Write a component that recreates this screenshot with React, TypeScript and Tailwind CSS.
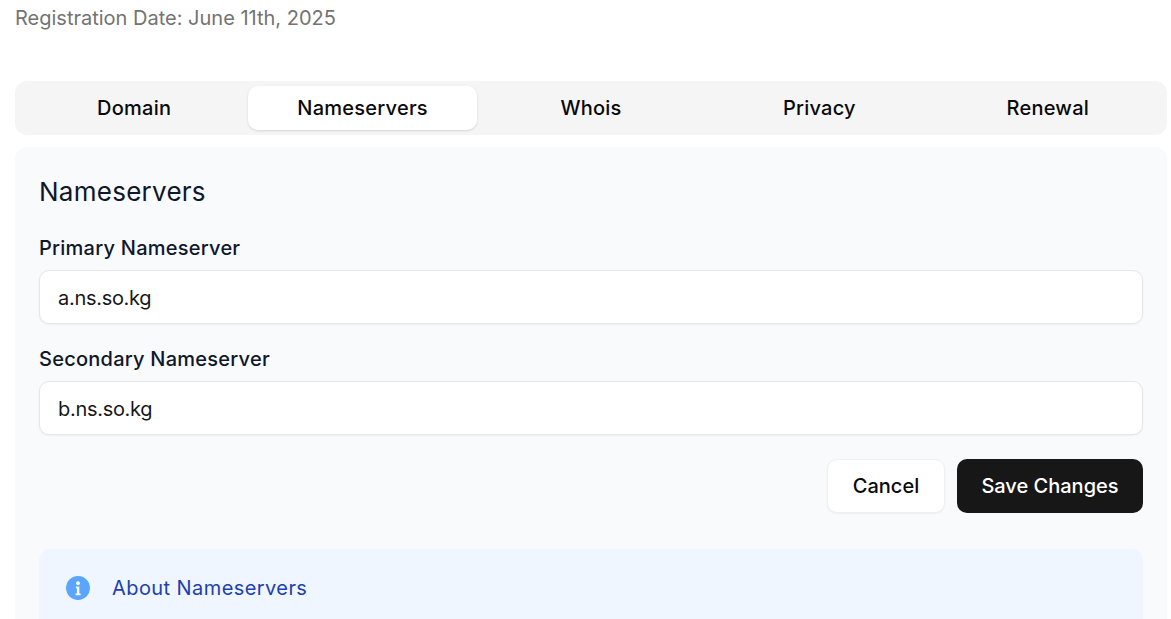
const tabs = ["Domain", "Nameservers", "Whois", "Privacy", "Renewal"];

function Field({ label, value }: { label: string; value: string }) {
  return (
    <div className="flex flex-col gap-[8px]">
      <label className="text-[20px] leading-[28px] font-medium tracking-[0.012em] text-[#0f172a]">{label}</label>
      <input
        readOnly
        value={value}
        className="h-[54px] w-full rounded-[10px] border border-[#e5e7eb] bg-white px-[18px] pt-[2px] text-[20px] tracking-[-0.015em] text-[#171717] shadow-xs outline-none"
      />
    </div>
  );
}

export default function App() {
  return (
    <div className="h-[619px] overflow-hidden bg-white pl-[15px] pr-[4px] font-['Inter',sans-serif]">
      <p className="pt-[4px] text-[20px] leading-[28px] text-[#737373]">Registration Date: June 11th, 2025</p>

      <div className="mt-[49px] grid grid-cols-5 rounded-[12px] bg-[#f5f5f5] p-[5px]">
        {tabs.map(t => (
          <div
            key={t}
            className={`flex h-[44px] items-center justify-center rounded-[10px] text-[20px] font-medium tracking-[0.012em] text-[#0a0a0a] ${t === "Nameservers" ? "bg-white shadow-sm" : ""}`}
          >
            {t}
          </div>
        ))}
      </div>

      <div className="mt-[12px] rounded-t-[12px] bg-[#f9fafb] px-[24px] pt-[28px]">
        <h2 className="text-[26px] leading-[34px] font-normal tracking-[0.01em] text-[#0f172a]">Nameservers</h2>
        <div className="mt-[25px] flex flex-col gap-[21px]">
          <Field label="Primary Nameserver" value="a.ns.so.kg" />
          <Field label="Secondary Nameserver" value="b.ns.so.kg" />
        </div>
        <div className="mt-[24px] flex justify-end gap-[12px]">
          <button className="h-[54px] w-[118px] rounded-[10px] border border-[#f0f0f0] bg-white text-[20px] font-medium text-[#0a0a0a] shadow-xs">Cancel</button>
          <button className="h-[54px] w-[186px] rounded-[10px] bg-[#171717] text-[20px] font-medium text-white">Save Changes</button>
        </div>
        <div className="mt-[36px] flex h-[90px] items-start gap-[21px] rounded-t-[10px] bg-[#eff6ff] px-[26px] pt-[25px]">
          <svg className="mt-[1px] h-[26px] w-[26px]" viewBox="0 0 24 24" fill="#5aa5fd">
            <circle cx="12" cy="12" r="11" />
            <circle cx="12" cy="7.5" r="1.7" fill="#fff" />
            <path d="M10 10.5h3.2v6.5h1.2v1.7H9.8V17H11v-4.8h-1z" fill="#fff" />
          </svg>
          <span className="text-[20px] leading-[28px] font-normal tracking-[0.021em] text-[#1e40af]">About Nameservers</span>
        </div>
      </div>
    </div>
  );
}
